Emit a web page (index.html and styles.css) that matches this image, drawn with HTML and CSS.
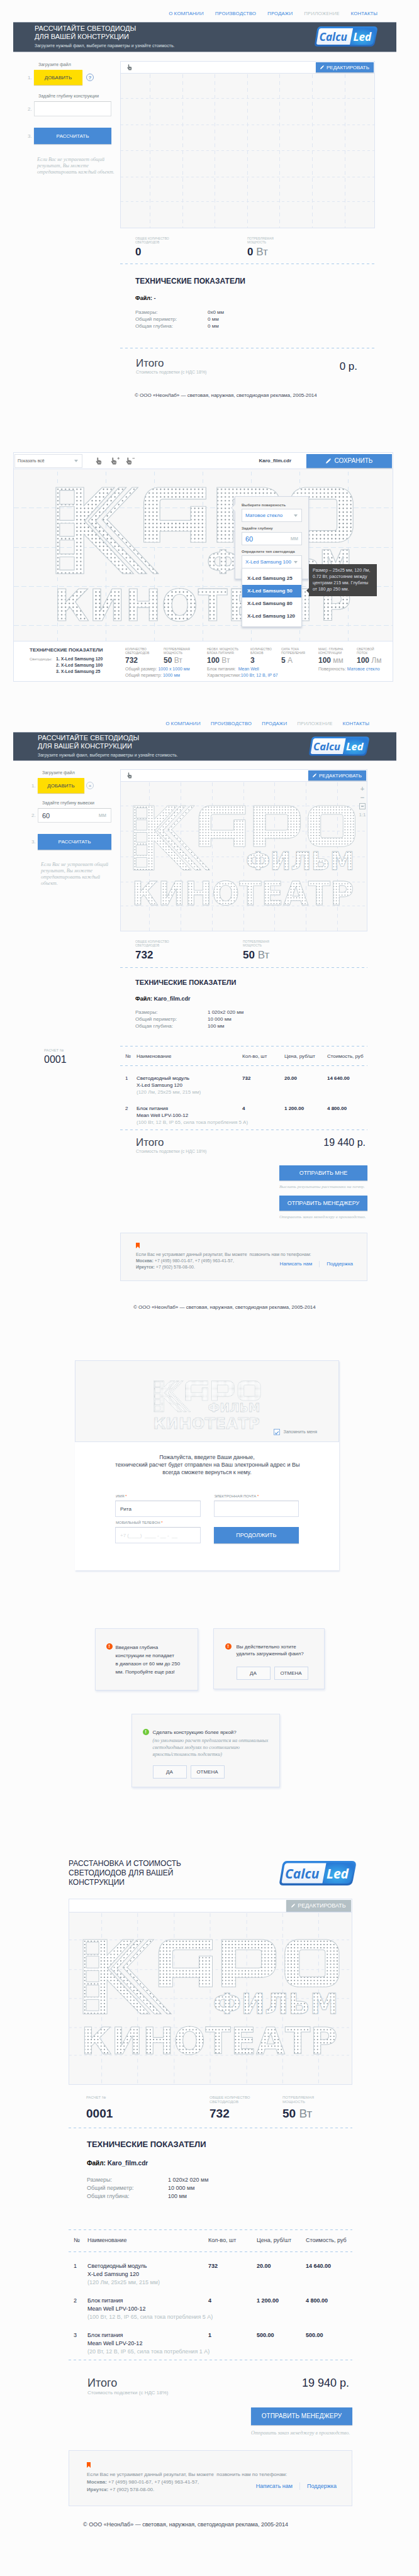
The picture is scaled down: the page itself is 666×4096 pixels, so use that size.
FILE: index.html
```html
<!DOCTYPE html>
<html lang="ru">
<head>
<meta charset="utf-8">
<meta name="viewport" content="width=device-width, initial-scale=1">
<title>CalcuLed</title>
<link rel="stylesheet" href="styles.css">
</head>
<body>
<svg class="defs" width="0" height="0" aria-hidden="true">
  <defs>
    <pattern id="leds" width="5.2" height="5.2" patternUnits="userSpaceOnUse">
      <rect width="5.2" height="5.2" fill="#fff"/>
      <circle cx="2.6" cy="2.6" r=".85" fill="#66737b"/>
    </pattern>
    <linearGradient id="badge-edge" x1="0" y1="0" x2="0" y2="1">
      <stop offset="0" stop-color="#2f86e0"/><stop offset="1" stop-color="#2667ba"/>
    </linearGradient>
    <radialGradient id="badge-glow" cx=".45" cy=".6" r=".6">
      <stop offset="0" stop-color="#3cb4ef"/><stop offset="1" stop-color="#2a7bd6"/>
    </radialGradient>
    <linearGradient id="badge-paper" x1="0" y1="0" x2="0" y2="1">
      <stop offset="0" stop-color="#fff"/><stop offset="1" stop-color="#eaf1fb"/>
    </linearGradient>
    <g id="badge">
      <path d="M12 0H115Q123 0 121.500 8L117 31Q115.500 39 108 39H6Q-1 39 .5 32L4.500 8Q6 0 12 0Z" fill="url(#badge-edge)"/>
      <path d="M75 3H113Q119.500 3 118.500 9L114.500 30Q113 36 107 36H69Z" fill="url(#badge-glow)"/>
      <path d="M13 3.500H74.500L68.500 35.500H7Q3 35.500 4 31.500L8 8Q9 3.500 13 3.500Z" fill="url(#badge-paper)"/>
    </g>
    <g id="sign">
      <path fill-rule="evenodd" d="M0 0H38V25L63 0H80L39 46L106 118H91L38 64V118H0ZM5 4V23H25V4ZM5 26V45H25V26ZM5 49V67H25V49ZM5 72V91H25V72ZM5 95V113H25V95Z"/>
      <path d="M86 0H96L54 46L124 118H113L44 46Z"/>
      <path d="M104 0H112L70 44L140 118H133L63 44Z"/>
      <path d="M120 75V20Q122 2 139 0H205V16H146Q142 16 142 20V45H184V26H205V75H184V60H142V75Z"/>
      <path fill-rule="evenodd" d="M220 0H285Q304 2 306 20V40Q304 58 285 60H242V75H220ZM242 16V45H278Q283 45 283 41V20Q283 16 278 16Z"/>
      <path fill-rule="evenodd" d="M340 0H386Q404 2 406 20V55Q404 73 386 75H340Q322 73 320 55V20Q322 2 340 0ZM347 16Q343 16 343 20V55Q343 59 347 59H380Q384 59 384 55V20Q384 16 380 16Z"/>
    </g>
    <g id="hand">
      <path d="M4 1Q6 0 6.500 2V8Q8 6.500 9 8.300Q10.500 7 11.500 9Q13 8 14 10Q15 12 14.500 15Q14 17 13 19H5Q4.500 16.500 2.500 14.500L.6 11Q0 9.500 1.500 9.500L3.500 11.500V2Z"/>
      <path d="M7 12V16M9.300 12V16M11.600 12V16" stroke="#fff" stroke-width="1"/>
    </g>
    <path id="pencil" d="M0 10L.8 7.200L7 1L9 3L2.800 9.200ZM7.600 .4Q8.300-.3 9 .3L9.700 1Q10.300 1.700 9.600 2.400L9.400 2.600L7.400 .6Z"/>
  </defs>
</svg>

<section class="screen empty">
  <nav class="site-nav">
    <a href="#">О КОМПАНИИ</a><a href="#">ПРОИЗВОДСТВО</a><a href="#">ПРОДАЖИ</a><a href="#" class="current">ПРИЛОЖЕНИЕ</a><a href="#">КОНТАКТЫ</a>
  </nav>
  <header class="hero">
    <div>
      <h1>РАССЧИТАЙТЕ СВЕТОДИОДЫ<br>ДЛЯ ВАШЕЙ КОНСТРУКЦИИ</h1>
      <p>Загрузите нужный фаил, выберите параметры и узнайте стоимость.</p>
    </div>
    <svg class="logo" viewBox="0 0 122 39"><use href="#badge"/><text x="9" y="28">Calcu</text><text x="75" y="28" class="led">Led</text></svg>
  </header>
  <div class="workspace">
    <form class="steps">
      <p class="step-label">Загрузите файл</p>
      <div class="step"><span class="num">1.</span><button type="button" class="btn add">ДОБАВИТЬ</button><button type="button" class="round help" aria-label="Помощь">?</button></div>
      <label class="step-label" for="depth-a">Задайте глубину конструкции</label>
      <div class="step"><span class="num">2.</span><span class="field"><input id="depth-a" type="text"></span></div>
      <div class="step calc"><span class="num">3.</span><button type="button" class="btn">РАССЧИТАТЬ</button></div>
      <p class="hint">Если Вас не устраевает общий результат, Вы можете<br>отредактировать каждый объект.</p>
    </form>
    <div class="main">
      <div class="board">
        <div class="board-bar">
          <svg class="hand" viewBox="0 0 16 20"><use href="#hand"/></svg>
          <button type="button" class="btn edit"><svg class="pencil" viewBox="0 0 10 10"><use href="#pencil"/></svg>РЕДАКТИРОВАТЬ</button>
        </div>
        <svg class="canvas" viewBox="0 0 403 245">
          <path class="grid-v" d="M46.500 1V245M98.500 1V245M149.500 1V245M201.500 1V245M252.500 1V245M304.500 1V245M356.500 1V245"/>
          <path class="grid-h" d="M0 39.500H403M0 81.500H403M0 122.500H403M0 164.500H403M0 203.500H403"/>
        </svg>
      </div>
      <dl class="stats">
        <div><dt>ОБЩЕЕ КОЛИЧЕСТВО<br>СВЕТОДИОДОВ</dt><dd>0</dd></div>
        <div><dt>ПОТРЕБЛЯЕМАЯ<br>МОЩНОСТЬ</dt><dd>0 <span>Вт</span></dd></div>
      </dl>
      <div class="rule"></div>
      <div class="tech">
        <h2>ТЕХНИЧЕСКИЕ ПОКАЗАТЕЛИ</h2>
        <h3><b>Файл:</b> -</h3>
        <dl class="specs">
          <dt>Размеры:</dt><dd>0x0 мм</dd>
          <dt>Общий периметр:</dt><dd>0 мм</dd>
          <dt>Общая глубина:</dt><dd>0 мм</dd>
        </dl>
      </div>
      <div class="rule"></div>
      <div class="total">
        <div><strong>Итого</strong><small>Стоимость подсветки (с НДС 18%)</small></div>
        <span class="sum">0 р.</span>
      </div>
      <footer class="copy">© ООО «НеонЛаб» — световая, наружная, светодиодная реклама, 2005-2014</footer>
    </div>
  </div>
</section>

<section class="editor">
  <div class="editor-bar">
    <span class="drop show-all"><select aria-label="Показать"><option>Показать всё</option></select></span>
    <div class="tools">
      <svg class="tool" viewBox="0 0 24 20"><use href="#hand"/></svg>
      <svg class="tool" viewBox="0 0 24 20"><use href="#hand"/><path d="M17 3H23M20 0V6" stroke="#777" stroke-width="1.500"/></svg>
      <svg class="tool" viewBox="0 0 24 20"><use href="#hand"/><path d="M17 3H23" stroke="#777" stroke-width="1.500"/></svg>
    </div>
    <strong class="file">Karo_film.cdr</strong>
    <button type="button" class="btn save"><svg class="pencil" viewBox="0 0 10 10"><use href="#pencil"/></svg>СОХРАНИТЬ</button>
  </div>
  <div class="stage">
    <svg class="canvas" viewBox="0 0 602 273">
      <path class="grid-v wide" d="M69.500 4V273M146.500 4V273M223.500 4V273M300.500 4V273M377.500 4V273M454.500 4V273M531.500 4V273"/>
      <path class="grid-h wide" d="M0 61.500H602M0 124.500H602M0 186.500H602M0 248.500H602"/>
      <g class="sign-shape" transform="translate(67 29) scale(1.163)"><use href="#sign"/><text x="206" y="118" class="film">ФИЛЬМ</text><text x="-3" y="182" class="cinema">КИНОТЕАТР</text></g>
    </svg>
    <form class="popup">
      <label for="surface">Выберите поверхность</label>
      <span class="drop"><select id="surface"><option>Матовое стекло</option></select></span>
      <label for="depth-b">Задайте глубину</label>
      <span class="field"><input id="depth-b" type="text" value="60"><i>мм</i></span>
      <label for="led">Определите тип светодиода</label>
      <span class="drop"><select id="led"><option>X-Led Samsung 100</option></select></span>
      <ul class="options" role="listbox">
        <li role="option">X-Led Samsung 25</li>
        <li role="option" aria-selected="true">X-Led Samsung 50</li>
        <li role="option">X-Led Samsung 80</li>
        <li role="option">X-Led Samsung 120</li>
      </ul>
      <p class="tip" role="tooltip">Размер – 25x25 мм, 120 Лм, 0.72 Вт, расстояние между центрами 215 мм. Глубины от 180 до 250 мм.</p>
    </form>
  </div>
  <div class="summary">
    <div class="sum-leds">
      <h2>ТЕХНИЧЕСКИЕ ПОКАЗАТЕЛИ</h2>
      <div><span>Светодиоды:</span>
        <ol><li>1. X-Led Samsung 120</li><li>2. X-Led Samsung 100</li><li>3. X-Led Samsung 25</li></ol>
      </div>
    </div>
    <div class="group">
      <dl class="mini two"><div><dt>КОЛИЧЕСТВО<br>СВЕТОДИОДОВ</dt><dd>732</dd></div><div><dt>ПОТРЕБЛЯЕМАЯ<br>МОЩНОСТЬ</dt><dd>50 <span>Вт</span></dd></div></dl>
      <p>Общий размер: <b>1000 x 1000 мм</b></p>
      <p>Общий периметр: <b>1000 мм</b></p>
    </div>
    <div class="group">
      <dl class="mini three"><div><dt>НЕОБХ. МОЩНОСТЬ<br>БЛОКА ПИТАНИЯ:</dt><dd>100 <span>Вт</span></dd></div><div><dt>КОЛИЧЕСТВО<br>БЛОКОВ</dt><dd>3</dd></div><div><dt>СИЛА ТОКА<br>ПОТРЕБЛЕНИЯ</dt><dd>5 <span>А</span></dd></div></dl>
      <p>Блок питания: &nbsp;<b>Mean Well</b></p>
      <p>Характеристики:<b>100 Вт, 12 В, IP 67</b></p>
    </div>
    <div class="group">
      <dl class="mini two"><div><dt>МАКС. ГЛУБИНА<br>КОНСТРУКЦИИ</dt><dd>100 <span>мм</span></dd></div><div><dt>СВЕТОВОЙ<br>ПОТОК</dt><dd>100 <span>Лм</span></dd></div></dl>
      <p>Поверхность: <b>Матовое стекло</b></p>
    </div>
  </div>
</section>

<section class="screen filled">
  <nav class="site-nav">
    <a href="#">О КОМПАНИИ</a><a href="#">ПРОИЗВОДСТВО</a><a href="#">ПРОДАЖИ</a><a href="#" class="current">ПРИЛОЖЕНИЕ</a><a href="#">КОНТАКТЫ</a>
  </nav>
  <header class="hero">
    <div>
      <h1>РАССЧИТАЙТЕ СВЕТОДИОДЫ<br>ДЛЯ ВАШЕЙ КОНСТРУКЦИИ</h1>
      <p>Загрузите нужный фаил, выберите параметры и узнайте стоимость.</p>
    </div>
    <svg class="logo" viewBox="0 0 122 39"><use href="#badge"/><text x="9" y="28">Calcu</text><text x="75" y="28" class="led">Led</text></svg>
  </header>
  <div class="workspace">
    <form class="steps">
      <p class="step-label">Загрузите файл</p>
      <div class="step"><span class="num">1.</span><button type="button" class="btn add">ДОБАВИТЬ</button><button type="button" class="round" aria-label="Удалить">×</button></div>
      <label class="step-label" for="depth-c">Задайте глубину вывески</label>
      <div class="step"><span class="num">2.</span><span class="field"><input id="depth-c" type="text" value="60"><i>мм</i></span></div>
      <div class="step calc"><span class="num">3.</span><button type="button" class="btn">РАССЧИТАТЬ</button></div>
      <p class="hint">Если Вас не устраевает общий результат, Вы можете<br>отредактировать каждый объект.</p>
    </form>
    <div class="main">
      <div class="board">
        <div class="board-bar">
          <svg class="hand" viewBox="0 0 16 20"><use href="#hand"/></svg>
          <button type="button" class="btn edit"><svg class="pencil" viewBox="0 0 10 10"><use href="#pencil"/></svg>РЕДАКТИРОВАТЬ</button>
        </div>
        <svg class="canvas" viewBox="0 0 391 237">
          <path class="grid-v" d="M45.500 1V237M95.500 1V237M145.500 1V237M195.500 1V237M244.500 1V237M294.500 1V237M344.500 1V237"/>
          <path class="grid-h" d="M0 38.500H391M0 78.500H391M0 119.500H391M0 159.500H391M0 197.500H391"/>
          <g class="sign-shape" transform="translate(20 38) scale(.868)"><use href="#sign"/><text x="206" y="118" class="film">ФИЛЬМ</text><text x="-3" y="182" class="cinema">КИНОТЕАТР</text></g>
        </svg>
        <div class="zoom">
          <button type="button" aria-label="Увеличить">+</button>
          <button type="button" aria-label="Уменьшить">−</button>
          <button type="button" class="fit" aria-label="Вписать"></button>
          <button type="button">1:1</button>
        </div>
      </div>
      <dl class="stats">
        <div><dt>ОБЩЕЕ КОЛИЧЕСТВО<br>СВЕТОДИОДОВ</dt><dd>732</dd></div>
        <div><dt>ПОТРЕБЛЯЕМАЯ<br>МОЩНОСТЬ</dt><dd>50 <span>Вт</span></dd></div>
      </dl>
      <div class="rule"></div>
      <div class="tech">
        <h2>ТЕХНИЧЕСКИЕ ПОКАЗАТЕЛИ</h2>
        <h3><b>Файл:</b> Karo_film.cdr</h3>
        <dl class="specs">
          <dt>Размеры:</dt><dd>1 020x2 020 мм</dd>
          <dt>Общий периметр:</dt><dd>10 000 мм</dd>
          <dt>Общая глубина:</dt><dd>100 мм</dd>
        </dl>
      </div>
    </div>
    <div class="order"><span>РАСЧЕТ №</span><strong>0001</strong></div>
    <div class="main">
      <table class="items">
        <thead><tr><th>№</th><th>Наименование</th><th>Кол-во, шт</th><th>Цена, руб/шт</th><th>Стоимость, руб</th></tr></thead>
        <tbody>
          <tr><td>1</td><td>Светодиодный модуль<br>X-Led Samsung 120<br><small>(120 Лм, 25x25 мм, 215 мм)</small></td><td>732</td><td>20.00</td><td>14 640.00</td></tr>
          <tr><td>2</td><td>Блок питания<br>Mean Well LPV-100-12<br><small>(100 Вт, 12 В, IP 65, сила тока потребления 5 А)</small></td><td>4</td><td>1 200.00</td><td>4 800.00</td></tr>
        </tbody>
      </table>
      <div class="total">
        <div><strong>Итого</strong><small>Стоимость подсветки (с НДС 18%)</small></div>
        <span class="sum">19 440 р.</span>
      </div>
      <div class="send">
        <button type="button" class="btn">ОТПРАВИТЬ МНЕ</button>
        <p>Выслать результаты расстановки на почту.</p>
        <button type="button" class="btn">ОТПРАВИТЬ МЕНЕДЖЕРУ</button>
        <p>Отправить заказ менеджеру в производство.</p>
      </div>
      <aside class="contact">
        <svg class="mark" viewBox="0 0 6 9"><path d="M0 0H6V9L3 6L0 9Z"/></svg>
        <p>Если Вас не устраивает данный результат, Вы можете&nbsp; позвонить нам по телефонам:</p>
        <div>
          <p><b>Москва:</b> +7 (495) 980-01-67, +7 (495) 963-41-57,<br><b>Иркутск:</b> +7 (902) 578-08-00.</p>
          <nav><a href="#">Написать нам</a><a href="#">Поддержка</a></nav>
        </div>
      </aside>
    </div>
  </div>
  <footer class="copy">© ООО «НеонЛаб» — световая, наружная, светодиодная реклама, 2005-2014</footer>
</section>

<section class="dialog">
  <div class="dialog-top">
    <svg class="sign" viewBox="-1 -1 409 186"><g class="sign-shape"><use href="#sign"/><text x="206" y="118" class="film">ФИЛЬМ</text><text x="-3" y="182" class="cinema">КИНОТЕАТР</text></g></svg>
    <label class="remember"><input type="checkbox" checked>Запомнить меня</label>
  </div>
  <form>
    <p>Пожалуйста, введите Ваши данные,<br>технический расчет будет отправлен на Ваш электронный адрес и Вы<br>всегда сможете вернуться к нему.</p>
    <div class="fields">
      <div><label for="name">ИМЯ <em>*</em></label><input id="name" type="text" value="Рита"></div>
      <div><label for="mail">ЭЛЕКТРОННАЯ ПОЧТА <em>*</em></label><input id="mail" type="email"></div>
      <div><label for="phone">МОБИЛЬНЫЙ ТЕЛЕФОН <em>*</em></label><input id="phone" type="tel" placeholder="+7 (____)  ____ - __ -  __"></div>
      <button type="button" class="btn">ПРОДОЛЖИТЬ</button>
    </div>
  </form>
</section>

<section class="alerts">
  <div class="alert range">
    <span class="bang">!</span>
    <p>Введеная глубина<br>конструкции не попадает<br>в диапазон от 60 мм до 250<br>мм. Попробуйте еще раз!</p>
  </div>
  <div class="alert delete">
    <span class="bang">!</span>
    <div><p>Вы действительно хотите<br>удалить загруженный фаил?</p>
    <div class="choice"><button type="button">ДА</button><button type="button">ОТМЕНА</button></div></div>
  </div>
  <div class="alert bright">
    <span class="bang ok">!</span>
    <div><p>Сделать конструкцию более яркой?</p>
    <p class="note">(по умолчанию расчет предлагается на оптимальных<br>светодиодных модулях по соотношению<br>яркость/стоимость подсветки)</p>
    <div class="choice"><button type="button">ДА</button><button type="button">ОТМЕНА</button></div></div>
  </div>
</section>

<section class="report">
  <header class="report-head">
    <h1>РАССТАНОВКА И СТОИМОСТЬ<br>СВЕТОДИОДОВ ДЛЯ ВАШЕЙ<br>КОНСТРУКЦИИ</h1>
    <svg class="logo" viewBox="0 0 122 39"><use href="#badge"/><text x="9" y="28">Calcu</text><text x="75" y="28" class="led">Led</text></svg>
  </header>
  <div class="board">
    <div class="board-bar">
      <button type="button" class="btn edit" disabled><svg class="pencil" viewBox="0 0 10 10"><use href="#pencil"/></svg>РЕДАКТИРОВАТЬ</button>
    </div>
    <svg class="canvas" viewBox="0 0 448 272">
      <path class="grid-v" d="M51.500 1V272M108.500 1V272M166.500 1V272M223.500 1V272M281.500 1V272M338.500 1V272M395.500 1V272"/>
      <path class="grid-h" d="M0 43.500H448M0 90.500H448M0 136.500H448M0 182.500H448M0 226.500H448"/>
      <g class="sign-shape" transform="translate(22 43)"><use href="#sign"/><text x="206" y="118" class="film">ФИЛЬМ</text><text x="-3" y="182" class="cinema">КИНОТЕАТР</text></g>
    </svg>
  </div>
  <dl class="stats">
    <div><dt>РАСЧЕТ №<br>&nbsp;</dt><dd>0001</dd></div>
    <div><dt>ОБЩЕЕ КОЛИЧЕСТВО<br>СВЕТОДИОДОВ</dt><dd>732</dd></div>
    <div><dt>ПОТРЕБЛЯЕМАЯ<br>МОЩНОСТЬ</dt><dd>50 <span>Вт</span></dd></div>
  </dl>
  <div class="rule"></div>
  <div class="tech">
    <h2>ТЕХНИЧЕСКИЕ ПОКАЗАТЕЛИ</h2>
    <h3><b>Файл:</b> Karo_film.cdr</h3>
    <dl class="specs">
      <dt>Размеры:</dt><dd>1 020x2 020 мм</dd>
      <dt>Общий периметр:</dt><dd>10 000 мм</dd>
      <dt>Общая глубина:</dt><dd>100 мм</dd>
    </dl>
  </div>
  <table class="items">
    <thead><tr><th>№</th><th>Наименование</th><th>Кол-во, шт</th><th>Цена, руб/шт</th><th>Стоимость, руб</th></tr></thead>
    <tbody>
      <tr><td>1</td><td>Светодиодный модуль<br>X-Led Samsung 120<br><small>(120 Лм, 25x25 мм, 215 мм)</small></td><td>732</td><td>20.00</td><td>14 640.00</td></tr>
      <tr><td>2</td><td>Блок питания<br>Mean Well LPV-100-12<br><small>(100 Вт, 12 В, IP 65, сила тока потребления 5 А)</small></td><td>4</td><td>1 200.00</td><td>4 800.00</td></tr>
      <tr><td>3</td><td>Блок питания<br>Mean Well LPV-20-12<br><small>(20 Вт, 12 В, IP 65, сила тока потребления 1 А)</small></td><td>1</td><td>500.00</td><td>500.00</td></tr>
    </tbody>
  </table>
  <div class="total">
    <div><strong>Итого</strong><small>Стоимость подсветки (с НДС 18%)</small></div>
    <span class="sum">19 940 р.</span>
  </div>
  <div class="send">
    <button type="button" class="btn">ОТПРАВИТЬ МЕНЕДЖЕРУ</button>
    <p>Отправить заказ менеджеру в производство.</p>
  </div>
  <aside class="contact">
    <svg class="mark" viewBox="0 0 6 9"><path d="M0 0H6V9L3 6L0 9Z"/></svg>
    <p>Если Вас не устраивает данный результат, Вы можете&nbsp; позвонить нам по телефонам:</p>
    <div>
      <p><b>Москва:</b> +7 (495) 980-01-67, +7 (495) 963-41-57,<br><b>Иркутск:</b> +7 (902) 578-08-00.</p>
      <nav><a href="#">Написать нам</a><a href="#">Поддержка</a></nav>
    </div>
  </aside>
  <footer class="copy">© ООО «НеонЛаб» — световая, наружная, светодиодная реклама, 2005-2014</footer>
</section>
</body>
</html>
```
FILE: styles.css
```css
:root {
  --blue: #478ad6;
  --link: #2f7edb;
  --navy: #232a44;
  --text: #3c4656;
  --gray: #859097;
  --pale: #b3bfc4;
  --line: #dde4f2;
  --panel: #f7f7f7;
}
* { box-sizing: border-box; }
body {
  margin: 0;
  background: #fcfcfc;
  color: var(--text);
  font: 8px/11px "Liberation Sans", Arial, sans-serif;
}
h1, h2, h3, p, dl, dd, dt, ol, ul { margin: 0; padding: 0; font-weight: normal; }
ol, ul { list-style: none; }
a { color: var(--link); text-decoration: none; }
button, input, select { font: inherit; color: inherit; margin: 0; border-radius: 0; }
.defs { position: absolute; }

/* shared controls */
.btn {
  border: 0;
  padding: 0;
  background: var(--blue);
  color: #fff;
  box-shadow: 0 1px 1px #b9c4d2;
  display: flex;
  align-items: center;
  justify-content: center;
}
.pencil { width: 6px; height: 6px; margin-right: 4px; fill: currentColor; }
.field { display: flex; align-items: center; background: #fff; border: 1px solid #dcdfe2; border-top-color: #cfd2d4; }
.field input { flex: 1; min-width: 0; width: 0; height: 100%; border: 0; background: none; padding: 0 0 0 6px; font-size: 11px; outline: 0; }
.field i { font-style: normal; color: var(--pale); font-size: 9px; padding-right: 7px; }
.drop { display: block; position: relative; background: #fff; border: 1px solid #dfe3ea; }
.drop select { appearance: none; display: block; width: 100%; height: 100%; border: 0; background: none; padding: 0 6px; }
.drop::after {
  content: "";
  position: absolute;
  right: 6px;
  top: 50%;
  margin-top: -2px;
  border: 3px solid transparent;
  border-top: 4px solid var(--pale);
  border-bottom: 0;
  pointer-events: none;
}
.rule { height: 1px; background: repeating-linear-gradient(90deg, #a9cbea 0 4px, transparent 4px 8px); }

/* header */
.site-nav { display: flex; justify-content: flex-end; gap: 18px; padding: 16px 66px 9px; font: 8px/10px "Open Sans", sans-serif; }
.site-nav .current { color: var(--pale); }
.hero { display: flex; align-items: center; justify-content: space-between; margin: 0 36px 0 21px; padding: 3px 30px 5px 34px; background: #424f60; border-top: 1px solid #8490a0; border-bottom: 1px solid #a5abb8; color: #fff; }
.hero h1 { font-size: 11px; line-height: 13px; }
.hero p { margin-top: 3px; font-size: 7px; line-height: 9px; color: #dbe0e6; }
.logo { display: block; width: 100px; height: 32px; }
.logo text { font: italic bold 21px "Open Sans", sans-serif; fill: #2f7ad2; }
.logo .led { fill: #fff; }

/* calculator */
.workspace { display: grid; grid-template-columns: 133px 1fr; column-gap: 14px; padding: 14px 70px 0 44px; }
.steps { padding-top: 1px; }
.step-label { display: block; padding-left: 17px; margin-bottom: 4px; font-size: 7px; line-height: 9px; color: #737d83; }
.step { display: grid; grid-template-columns: 10px 1fr auto; align-items: center; margin-bottom: 13px; }
.num { color: var(--pale); }
.step .field, .step .btn { height: 24px; }
.btn.add { background: #fd0; color: var(--text); width: 77px; box-shadow: 0 1px 1px #dcc97a; }
.round { width: 12px; height: 12px; padding: 0; margin-right: 28px; border: 1px solid #c3cfdd; border-radius: 50%; background: none; color: #8fa3b8; font-size: 8px; line-height: 9px; }
.round.help { border-color: #84a6d4; color: #6b94cc; font-weight: bold; }
.step.calc { margin: 18px 0 20px; }
.step.calc .btn { height: 26px; }
.hint { margin-right: -10px; padding-left: 15px; font: italic 8px/10px "Liberation Serif", serif; color: var(--pale); }
.main { min-width: 0; }
.board { position: relative; border: 1px solid var(--line); background: var(--panel); }
.board-bar { height: 19px; display: flex; align-items: center; justify-content: flex-end; padding-right: 1px; background: #fff; border-bottom: 1px solid var(--line); }
.board-bar .hand { width: 8px; height: 10px; margin: 0 auto 0 10px; fill: #6e777b; }
.edit { width: 92px; height: 16px; }
.edit:disabled { background: #b4c0c5; }
.canvas { display: block; width: 100%; height: auto; }
.grid-v, .grid-h { fill: none; stroke: #dfe6f2; stroke-dasharray: 6 5; }
.grid-h { stroke-dasharray: 4 4; }
.grid-v.wide { stroke: #d9e6f3; stroke-dasharray: 6 6; }
.grid-h.wide { stroke: #d9e6f3; stroke-dasharray: 8 4; }
.sign-shape { fill: url(#leds); stroke: #c2ccd2; stroke-width: 1; }
.sign-shape text { font-family: "DejaVu Sans", sans-serif; font-weight: bold; }
.film { font-size: 45px; }
.cinema { font-size: 59px; }
.stats { display: grid; grid-template-columns: 178px 1fr; padding: 13px 0 8px 24px; }
.stats dt { font-size: 5px; line-height: 6px; color: var(--pale); }
.stats dd { margin-top: 3px; font-size: 17px; line-height: 20px; font-weight: bold; color: var(--navy); }
.stats dd span { font-weight: normal; color: var(--gray); }
.tech { padding: 20px 0 29px 24px; }
.tech h2 { font-size: 11px; line-height: 14px; font-weight: bold; color: var(--navy); }
.empty .tech h2 { font-size: 12px; }
.tech h3 { margin: 15px 0 12px; font-size: 9px; line-height: 10px; font-weight: bold; color: var(--navy); }
.tech h3 b { color: #000; }
.specs { display: grid; grid-template-columns: 115px 1fr; line-height: 11px; }
.specs dt { color: var(--gray); }
.total { display: flex; justify-content: space-between; align-items: flex-start; padding: 14px 28px 0 25px; }
.total strong { display: block; font-size: 17px; line-height: 20px; font-weight: normal; color: var(--text); }
.total small { display: block; font-size: 7px; line-height: 8px; color: var(--pale); }
.sum { font-size: 17px; line-height: 20px; color: var(--navy); padding-top: 5px; }
.copy { padding: 28px 0 0 23px; line-height: 10px; }

/* editor */
.editor { margin: 85px 41px 0 21px; border: 1px solid var(--line); background: #fff; }
.editor-bar { display: flex; align-items: center; height: 26px; padding: 1px; border-bottom: 1px solid var(--line); }
.show-all { width: 108px; height: 22px; font-size: 7px; color: #666; }
.show-all select { padding-left: 4px; }
.tools { display: flex; gap: 9px; margin-left: 21px; }
.tool { width: 15px; height: 12px; fill: #777; }
.file { margin-left: auto; color: var(--text); }
.save { width: 136px; height: 22px; margin-left: 24px; font-size: 10px; }
.save .pencil { width: 8px; height: 8px; margin-right: 6px; }
.stage { position: relative; background: var(--panel); }
.popup { position: absolute; left: 351px; top: 43px; width: 118px; height: 132px; padding: 10px 10px; background: #f6f6f6; border: 1px solid #d4dae4; box-shadow: 0 2px 3px #c9d0dc; }
.popup::before { content: ""; position: absolute; left: -5px; top: 13px; width: 8px; height: 8px; background: #f6f6f6; border: solid #d4dae4; border-width: 0 0 1px 1px; transform: rotate(45deg); }
.popup label { display: block; height: 9px; font-size: 6px; line-height: 7px; font-weight: bold; color: #666; }
.popup .drop, .popup .field { height: 21px; margin-bottom: 7px; color: var(--link); border-color: #d5dbe2; }
.popup .drop select { padding-left: 5px; padding-right: 0; }
.popup .field input { padding-left: 5px; }
.popup .field i { padding-right: 5px; }
.options { position: absolute; left: 10px; right: 10px; top: 113px; padding: 6px 0; background: #fff; border: 1px solid #d5dbe2; box-shadow: 0 2px 3px #c9d0dc; font-weight: bold; line-height: 20px; white-space: nowrap; }
.options li { padding-left: 8px; }
.options [aria-selected] { background: var(--blue); color: #fff; }
.tip { position: absolute; left: 117px; top: 107px; width: 108px; padding: 5px 6px 6px; background: #444; color: #dcdfe3; font-size: 7px; line-height: 10px; }
.tip::before { content: ""; position: absolute; left: -4px; top: 38px; border: 4px solid transparent; border-left: 0; border-right-color: #444; }
.summary { display: flex; padding: 9px 0 4px 25px; border-top: 1px solid var(--line); white-space: nowrap; }
.sum-leds { flex: none; width: 152px; }
.sum-leds h2 { font-size: 8px; font-weight: bold; line-height: 9px; margin-bottom: 5px; }
.sum-leds div { display: flex; font-size: 6px; color: #999; line-height: 10px; }
.sum-leds ol { margin-left: 6px; font-size: 7px; font-weight: bold; color: var(--text); }
.group { flex: none; font-size: 7px; line-height: 10px; color: #999; }
.group:nth-child(2) { width: 130px; }
.group:nth-child(3) { width: 177px; }
.group b { font-weight: normal; color: var(--blue); }
.mini { display: grid; margin-bottom: 2px; }
.mini.two { grid-template-columns: 61px 1fr; }
.mini.three { grid-template-columns: 69px 49px 1fr; }
.mini dt { font-size: 5px; line-height: 6px; color: #999; }
.mini dd { margin-top: 2px; font-size: 12px; line-height: 14px; font-weight: bold; color: var(--text); }
.mini dd span { font-weight: normal; color: #aaa; }

/* calculator with a result */
.filled { margin-top: 45px; }
.filled .site-nav { padding-right: 79px; gap: 16px; }
.filled .hero { padding: 2px 43px 4px 39px; }
.filled .logo { width: 96px; height: 31px; }
.filled .workspace { grid-template-columns: 127px 1fr; padding: 13px 82px 0 50px; }
.filled .step { margin-bottom: 11px; }
.filled .step .field { height: 23px; }
.filled .btn.add { width: 74px; }
.filled .step.calc { margin: 18px 0 19px; }
.filled .step.calc .btn { height: 25px; }
.zoom { position: absolute; right: 1px; top: 25px; width: 12px; display: grid; justify-items: center; gap: 4px; }
.zoom button { border: 0; padding: 0; background: none; color: var(--pale); font-size: 11px; line-height: 10px; font-weight: bold; }
.zoom .fit { width: 10px; height: 10px; border: 1px solid var(--pale); display: grid; place-items: center; }
.zoom .fit::before { content: ""; width: 4px; height: 2px; background: var(--pale); }
.zoom button:last-child { font-size: 8px; font-weight: normal; }
.filled .stats { grid-template-columns: 171px 1fr; padding-bottom: 9px; }
.filled .tech { padding: 16px 0 26px 24px; }
.filled .tech h3 { margin: 14px 0 11px; }
.order { padding: 4px 0 0 20px; color: var(--navy); }
.order span { display: block; font-size: 6px; line-height: 7px; color: var(--pale); }
.order strong { font-size: 16px; line-height: 22px; font-weight: normal; }
.items { width: 100%; border-collapse: collapse; table-layout: fixed; background: repeating-linear-gradient(90deg, #a9cbea 0 4px, transparent 4px 8px) bottom / 100% 1px no-repeat; }
.items thead { background: repeating-linear-gradient(90deg, #a9cbea 0 4px, transparent 4px 8px) top / 100% 1px no-repeat, repeating-linear-gradient(90deg, #a9cbea 0 4px, transparent 4px 8px) bottom / 100% 1px no-repeat; }
.items th { padding: 0; height: 32px; font-weight: normal; text-align: left; white-space: nowrap; }
.items td { padding: 0 0 15px; vertical-align: top; white-space: nowrap; color: var(--navy); }
.items tbody tr:first-child td { padding-top: 14px; }
.items tbody tr:last-child td { padding-bottom: 7px; }
.items td:nth-child(n+3) { font-weight: bold; }
.items th:first-child, .items td:first-child { width: 26px; padding-left: 8px; }
.items th:nth-child(3) { width: 67px; }
.items th:nth-child(4) { width: 68px; }
.items th:nth-child(5) { width: 64px; }
.items small { font-size: inherit; color: var(--pale); }
.filled .total { padding: 10px 3px 0 25px; }
.filled .sum { font-size: 16px; }
.filled .sum, .report .sum { padding-top: 0; }
.send { width: 140px; margin: 18px 0 0 auto; }
.send .btn { width: 100%; height: 24px; font-size: 9px; }
.send p { margin: 6px 0 9px; font: italic 7px/9px "Liberation Serif", serif; color: var(--pale); white-space: nowrap; }
.contact { margin-top: 20px; padding: 15px 22px 16px 24px; background: var(--panel); border: 1px solid var(--line); font-size: 7px; line-height: 10px; color: var(--gray); }
.mark { display: block; width: 6px; height: 9px; margin-bottom: 5px; fill: #ff5a00; }
.contact div { display: flex; justify-content: space-between; }
.contact nav { display: flex; align-self: center; font-size: 8px; }
.contact a + a { margin-left: 11px; padding-left: 11px; border-left: 1px solid var(--line); }
.filled > .copy { padding: 37px 0 0 212px; }

/* contact dialog */
.dialog { margin: 79px 127px 0 119px; background: #fff; box-shadow: 1px 2px 2px #dfe5f0; }
.dialog-top { position: relative; padding: 31px 0 19px; background: var(--panel); border: 1px solid var(--line); }
.dialog .sign { display: block; width: 171px; height: 78px; margin: 0 auto; }
.remember { position: absolute; right: 34px; bottom: 10px; display: flex; align-items: center; gap: 5px; font-size: 7px; line-height: 10px; color: var(--gray); }
.remember input { appearance: none; width: 10px; height: 10px; border: 1px solid #86afe0; background: #fff; display: grid; place-items: center; }
.remember input:checked::before { content: ""; width: 5px; height: 2px; border: solid var(--blue); border-width: 0 0 1px 1px; transform: rotate(-45deg); }
.dialog form { padding: 18px 64px 43px; }
.dialog p { text-align: center; font-size: 9px; line-height: 12px; white-space: nowrap; }
.fields { display: grid; grid-template-columns: 1fr 1fr; column-gap: 21px; row-gap: 6px; align-items: end; margin-top: 29px; }
.fields label { display: block; margin-bottom: 3px; padding-left: 1px; font-size: 6px; line-height: 7px; color: var(--gray); }
.fields em { color: #ff5a00; font-style: normal; }
.fields input { display: block; width: 100%; height: 26px; padding: 0 7px; border: 1px solid #d9dfed; border-top-color: #c9cedb; background: #fff; }
.fields ::placeholder { color: #d8dcde; }
.fields .btn { height: 26px; font-size: 9px; }

/* alerts */
.alerts { display: grid; grid-template-columns: 164px 177px; align-items: start; column-gap: 24px; row-gap: 37px; justify-content: center; padding-top: 92px; }
.alert { display: flex; align-items: flex-start; padding: 23px 17px 0; background: var(--panel); border: 1px solid var(--line); box-shadow: 1px 2px 3px #e3e8f2; white-space: nowrap; }
.bang { flex: none; width: 10px; height: 10px; border-radius: 50%; background: #f95a0c; color: #fff; font-weight: bold; font-size: 8px; line-height: 10px; text-align: center; }
.bang.ok { background: #6fc93a; }
.range p { margin-left: 5px; line-height: 13px; }
.range { padding-bottom: 22px; }
.delete { padding-left: 18px; padding-bottom: 14px; }
.delete > div { margin-left: 8px; }
.choice { display: flex; gap: 6px; margin-top: 15px; }
.choice button { width: 54px; height: 21px; padding: 0; border: 1px solid #cfdaec; background: #fafafa; color: var(--text); }
.bright { grid-column: 1 / -1; width: 236px; margin-left: 58px; padding-bottom: 13px; }
.bright > div { margin-left: 6px; }
.bright .note { margin-top: 2px; font: italic 8px/11px "Liberation Serif", serif; color: #93a5ae; }
.bright .choice { margin-top: 12px; }

/* report */
.report { padding: 114px 106px 78px 109px; font-size: 9px; line-height: 13px; }
.report-head { display: flex; justify-content: space-between; align-items: flex-start; margin-right: -6px; }
.report-head h1 { font-size: 12px; line-height: 15px; color: var(--navy); }
.report-head .logo { width: 122px; height: 39px; margin-top: 3px; }
.report .board { margin-top: 18px; }
.report .board-bar { height: 21px; }
.report .edit { width: 103px; height: 18px; font-size: 9px; }
.report .stats { grid-template-columns: 196px 116px 1fr; padding: 17px 0 10px 28px; }
.report .stats dt { font-size: 6px; line-height: 7px; }
.report .stats dd { margin-top: 3px; font-size: 19px; line-height: 24px; }
.report .tech { padding: 19px 0 46px 29px; }
.report .tech h2 { font-size: 13px; }
.report .tech h3 { margin: 16px 0 14px; font-size: 10px; line-height: 13px; }
.report .specs { grid-template-columns: 129px 1fr; line-height: 13px; }
.report .items th { height: 36px; }
.report .items td { padding-bottom: 16px; }
.report .items tbody tr:first-child td { padding-top: 16px; }
.report .items tbody tr:last-child td { padding-bottom: 7px; }
.report .items th:first-child, .report .items td:first-child { width: 30px; }
.report .items th:nth-child(3) { width: 77px; }
.report .items th:nth-child(4) { width: 78px; }
.report .items th:nth-child(5) { width: 74px; }
.report .total { padding: 25px 5px 0 30px; }
.report .total strong, .report .sum { font-size: 18px; line-height: 22px; }
.report .total small { font-size: 8px; line-height: 10px; }
.report .send { width: 161px; margin-top: 18px; }
.report .send .btn { height: 28px; font-size: 10px; }
.report .send p { margin: 8px 0 0; font-size: 8px; line-height: 10px; }
.report .contact { margin-top: 22px; padding: 18px 24px 19px 28px; font-size: 8px; line-height: 12px; }
.report .contact nav { font-size: 9px; }
.report .copy { padding: 24px 0 0 23px; }
```
